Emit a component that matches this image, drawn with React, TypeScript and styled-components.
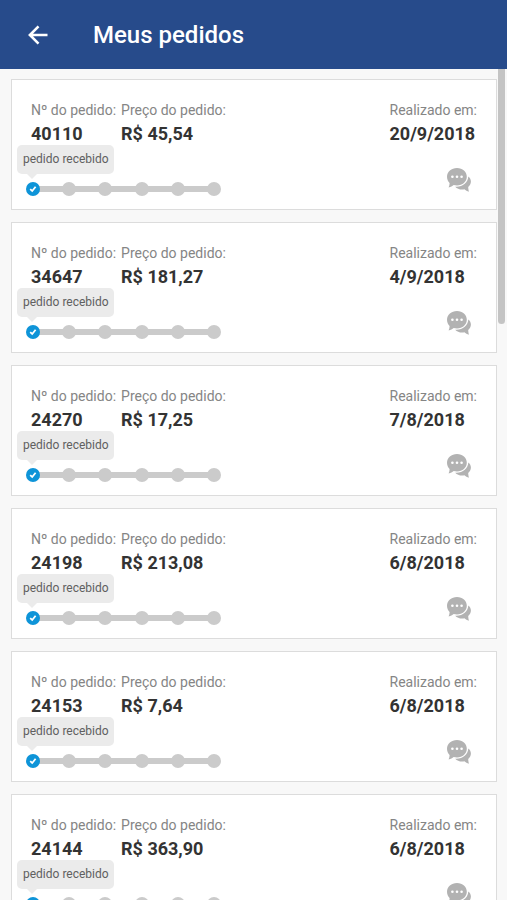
import React from "react";
import styled, { createGlobalStyle } from "styled-components";

const GlobalStyle = createGlobalStyle`
  * { box-sizing: border-box; }
  body {
    margin: 0;
    background: #f8f8f8;
    font-family: Roboto, "Liberation Sans", sans-serif;
  }
`;

const Screen = styled.div`
  position: relative;
  display: flex;
  flex-direction: column;
  height: 100vh;
  overflow: hidden;
`;

const Header = styled.header`
  display: flex;
  align-items: center;
  flex: none;
  gap: 43px;
  height: 69px;
  padding: 0 26px;
  background: #274b8b;
  color: #fff;
`;

const BackButton = styled.button`
  display: flex;
  padding: 0;
  border: 0;
  background: none;
  color: inherit;
  cursor: pointer;
`;

const Title = styled.h1`
  margin: 0;
  font-size: 24px;
  line-height: 32px;
  font-weight: 500;
`;

const Content = styled.main`
  position: relative;
  flex: 1;
  min-height: 0;
`;

const OrderList = styled.ul`
  display: flex;
  flex-direction: column;
  gap: 12px;
  height: 100%;
  margin: 0;
  padding: 10px 10px 10px 11px;
  overflow-y: auto;
  list-style: none;
  scrollbar-width: none;
`;

const ScrollThumb = styled.div`
  position: absolute;
  top: 0;
  right: 2px;
  width: 7px;
  height: 255px;
  border-radius: 0 0 4px 4px;
  background: #c4c4c4;
`;

const Card = styled.li`
  flex: none;
  padding: 20px 19px 17px;
  border: 1px solid #dcdcdc;
  background: #fff;
`;

const Details = styled.dl`
  display: flex;
  gap: 5px;
  margin: 0;
`;

const Field = styled.div<{ $end?: boolean }>`
  margin-left: ${(p) => (p.$end ? "auto" : "0")};
`;

const Label = styled.dt`
  font-size: 14px;
  line-height: 20px;
  color: #858585;
  white-space: nowrap;
`;

const Value = styled.dd`
  margin: 0;
  font-size: 18px;
  line-height: 28px;
  font-weight: 700;
  color: #333;
`;

const Footer = styled.div`
  display: flex;
  align-items: flex-end;
  justify-content: space-between;
  margin-top: 20px;
  padding-right: 6px;
`;

const Progress = styled.div`
  position: relative;
  margin-left: -5px;
  margin-bottom: -4px;
`;

const Steps = styled.ol`
  display: flex;
  align-items: center;
  justify-content: space-between;
  width: 195px;
  height: 14px;
  margin: 0;
  padding: 0;
  border-radius: 7px;
  background: linear-gradient(#cbcbcb, #cbcbcb) center / calc(100% - 14px) 6px no-repeat;
  list-style: none;
`;

const Step = styled.li<{ $done: boolean }>`
  display: flex;
  align-items: center;
  justify-content: center;
  width: 14px;
  height: 14px;
  border-radius: 50%;
  background: ${(p) => (p.$done ? "#0e94d8" : "#cbcbcb")};
`;

const StatusTip = styled.span`
  position: absolute;
  left: -9px;
  bottom: 22px;
  padding: 0 5px 0 6px;
  border-radius: 5px;
  background: #ebebeb;
  color: #606060;
  font-size: 12px;
  line-height: 29px;
  white-space: nowrap;

  &::after {
    content: "";
    position: absolute;
    top: 100%;
    left: 10px;
    border: 5px solid transparent;
    border-top-color: #ebebeb;
    border-bottom: 0;
  }
`;

const ChatButton = styled(BackButton)`
  color: #b2b2b2;
`;

const orders = [
  { id: "40110", price: "R$ 45,54", date: "20/9/2018" },
  { id: "34647", price: "R$ 181,27", date: "4/9/2018" },
  { id: "24270", price: "R$ 17,25", date: "7/8/2018" },
  { id: "24198", price: "R$ 213,08", date: "6/8/2018" },
  { id: "24153", price: "R$ 7,64", date: "6/8/2018" },
  { id: "24144", price: "R$ 363,90", date: "6/8/2018" },
];

const stepCount = 6;

function ArrowIcon() {
  return (
    <svg width="24" height="24" viewBox="0 0 24 24" fill="none" stroke="currentColor" strokeWidth="2.6" aria-hidden="true">
      <path d="M21.500 12H4.500M12.500 3.400L3.900 12L12.500 20.600" />
    </svg>
  );
}

function CheckIcon() {
  return (
    <svg width="8" height="8" viewBox="0 0 8 8" fill="none" stroke="#fff" strokeWidth="1.8" aria-hidden="true">
      <path d="M1.2 4.2L3.2 6L6.6 1.8" />
    </svg>
  );
}

function ChatIcon() {
  return (
    <svg width="24" height="24" viewBox="0 0 24 24" fill="currentColor" aria-hidden="true">
      <path d="M21.300 8.500C23 9.800 23.900 11.600 23.900 13.600c0 2.200-1 4.100-2.700 5.500c0 1.500.3 3 .7 4.700c-1.800-.5-3.200-1.400-4.500-2.500c-3.600.7-7.200-.3-9.200-2.600c7.100.6 13-4 13.100-10.200z" />
      <path d="M10 0C15.600 0 19.800 3.900 19.800 8.700S15.600 17.400 10 17.400c-1.200 0-2.300-.1-3.300-.4C5.400 18.300 3.700 19 1.600 19.400c.7-1.400 1-2.900 1-4.500C1 13.300 0 11.200 0 8.700C0 3.900 4.400 0 10 0z" />
      <g fill="#fff">
        <circle cx="5.400" cy="8.700" r="1.300" />
        <circle cx="10" cy="8.700" r="1.300" />
        <circle cx="14.600" cy="8.700" r="1.300" />
      </g>
    </svg>
  );
}

export default function App() {
  return (
    <Screen>
      <GlobalStyle />
      <Header>
        <BackButton type="button" aria-label="Voltar">
          <ArrowIcon />
        </BackButton>
        <Title>Meus pedidos</Title>
      </Header>
      <Content>
        <OrderList>
          {orders.map((order) => (
            <Card key={order.id}>
              <Details>
                <Field>
                  <Label>Nº do pedido:</Label>
                  <Value>{order.id}</Value>
                </Field>
                <Field>
                  <Label>Preço do pedido:</Label>
                  <Value>{order.price}</Value>
                </Field>
                <Field $end>
                  <Label>Realizado em:</Label>
                  <Value>{order.date}</Value>
                </Field>
              </Details>
              <Footer>
                <Progress>
                  <StatusTip>pedido recebido</StatusTip>
                  <Steps>
                    {Array.from({ length: stepCount }, (_, i) => (
                      <Step key={i} $done={i === 0}>
                        {i === 0 && <CheckIcon />}
                      </Step>
                    ))}
                  </Steps>
                </Progress>
                <ChatButton type="button" aria-label={`Mensagens do pedido ${order.id}`}>
                  <ChatIcon />
                </ChatButton>
              </Footer>
            </Card>
          ))}
        </OrderList>
        <ScrollThumb />
      </Content>
    </Screen>
  );
}
